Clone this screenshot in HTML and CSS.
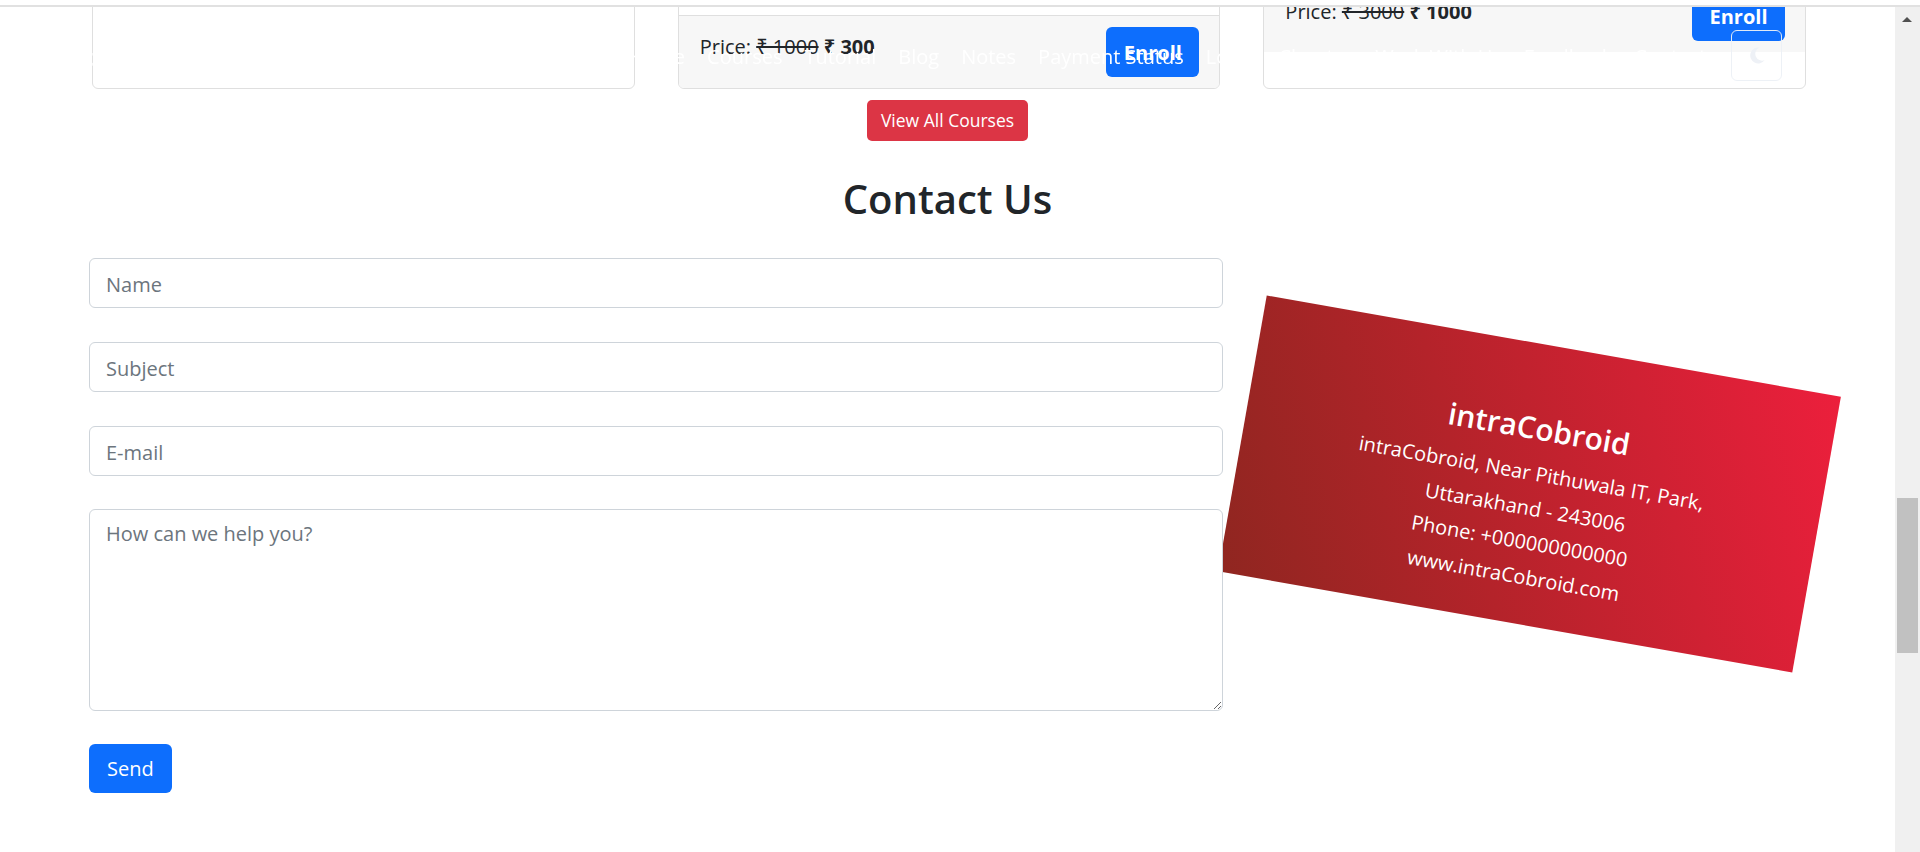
FILE: index.html
```html
<!DOCTYPE html>
<html lang="en">
<head>
<meta charset="utf-8">
<title>intraCobroid - Contact Us</title>
<link rel="stylesheet" href="styles.css">
</head>
<body>
<div class="topbar"></div>

<nav class="navbar">
  <span class="brand">intraCobroid</span>
  <ul class="nav">
    <li>Home</li>
    <li>Courses</li>
    <li>Tutorial</li>
    <li>Blog</li>
    <li>Notes</li>
    <li>Payment Status</li>
    <li>Login</li>
    <li>Chapter</li>
    <li>Work With Us</li>
    <li>Feedback</li>
    <li>Contact</li>
  </ul>
  <button class="mode" type="button" aria-label="Toggle dark mode">
    <svg width="20" height="20" viewBox="0 0 20 20"><path d="M12.5 2.5a8 8 0 1 0 5.2 12.6A6.6 6.6 0 0 1 12.5 2.5z" fill="#eef1f6"/></svg>
  </button>
</nav>

<main class="page">
  <section class="courses">
    <div class="card card-a"></div>
    <div class="card card-b">
      <div class="card-body"></div>
      <div class="card-footer">
        <span class="price">Price: <s>₹ 1000</s> <b>₹ 300</b></span>
        <button class="btn-enroll" type="button">Enroll</button>
      </div>
    </div>
    <div class="card card-c">
      <div class="card-footer">
        <span class="price">Price: <s>₹ 3000</s> <b>₹ 1000</b></span>
        <button class="btn-enroll" type="button">Enroll</button>
      </div>
      <div class="card-tail"></div>
    </div>
  </section>

  <div class="more"><a class="btn-red">View All Courses</a></div>

  <h2 class="title">Contact Us</h2>

  <section class="contact">
    <form class="form">
      <input class="field" type="text" placeholder="Name">
      <input class="field" type="text" placeholder="Subject">
      <input class="field" type="email" placeholder="E-mail">
      <textarea class="field area" placeholder="How can we help you?"></textarea>
      <button class="btn-send" type="button">Send</button>
    </form>
    <div class="aside">
      <div class="biz">
        <h3 class="biz-name">intraCobroid</h3>
        <p class="biz-line">intraCobroid, Near Pithuwala IT, Park,</p>
        <p class="biz-line">Uttarakhand - 243006</p>
        <p class="biz-line">Phone: +000000000000</p>
        <p class="biz-line">www.intraCobroid.com</p>
      </div>
    </div>
  </section>
</main>

<div class="scrollbar">
  <span class="sb-up"></span>
  <span class="sb-thumb"></span>
</div>
</body>
</html>
```

FILE: styles.css
```css
html, body {
  margin: 0;
  padding: 0;
  height: 852px;
  overflow: hidden;
  background: #fff;
}

body {
  font-family: "Open Sans", "Noto Sans", "DejaVu Sans", sans-serif;
  color: #212529;
}

/* thin strip at very top */
.topbar {
  position: fixed;
  top: 0;
  left: 0;
  width: 1920px;
  height: 5px;
  background: #fff;
  border-bottom: 2px solid #e1e1e1;
  z-index: 50;
}

/* transparent fixed navbar with white text */
.navbar {
  position: fixed;
  top: 0;
  left: 0;
  width: 1895px;
  height: 112px;
  display: flex;
  align-items: center;
  padding-left: 60px;
  box-sizing: border-box;
  z-index: 40;
  color: #fff;
  font-size: 20px;
  pointer-events: none;
}

.brand {
  font-size: 24px;
  font-weight: 700;
}

.nav {
  list-style: none;
  margin: 0 0 0 416px;
  padding: 0;
  display: flex;
  gap: 22px;
}

.mode {
  margin-left: auto;
  margin-right: 113px;
  margin-top: -2px;
  width: 51px;
  height: 51px;
  border: 1px solid rgba(236, 240, 245, 0.95);
  border-radius: 6px;
  background: transparent;
  display: flex;
  align-items: center;
  justify-content: center;
  padding: 0;
}

.page {
  width: 1895px;
}

/* course cards row (cut off at top) */
.courses {
  display: flex;
  gap: 43px;
  width: 1714px;
  margin: -40px 0 0 92px;
}

.card {
  flex: 1;
  height: 129px;
  border: 1px solid #dfdfdf;
  border-radius: 6px;
  box-sizing: border-box;
  background: #fff;
  display: flex;
  flex-direction: column;
  overflow: hidden;
}

.card-b .card-body {
  height: 54px;
}

.card-footer {
  display: flex;
  justify-content: space-between;
  align-items: flex-start;
  background: #f7f7f7;
  padding: 11px 20px 11px 21px;
}

.card-b .card-footer {
  flex: 1;
  border-top: 1px solid #dfdfdf;
}

.card-c .card-footer {
  padding-top: 30px;
}

.card-c .price {
  margin-top: 6px;
}

.card-tail {
  flex: 1;
}

.price {
  font-size: 20px;
  line-height: 30px;
  margin-top: 5px;
}

.price s {
  font-weight: 400;
}

.price b {
  font-weight: 700;
}

.btn-enroll {
  width: 93px;
  height: 50px;
  border: 0;
  border-radius: 6px;
  background: #0d6efd;
  color: #fff;
  font-family: inherit;
  font-size: 20px;
  font-weight: 700;
  padding: 0;
}

.more {
  text-align: center;
  margin-top: 11px;
}

.btn-red {
  display: inline-block;
  background: #dc3545;
  color: #fff;
  font-size: 17.5px;
  line-height: 27px;
  padding: 7px 14px;
  border-radius: 5px;
}

.title {
  text-align: center;
  font-size: 40px;
  line-height: 46px;
  font-weight: 600;
  margin: 35px 0 0;
}

.contact {
  display: flex;
  align-items: flex-start;
  margin-top: 36px;
}

.form {
  position: relative;
  z-index: 2;
  width: 1134px;
  margin-left: 89px;
  display: flex;
  flex-direction: column;
  align-items: flex-start;
}

.field {
  width: 100%;
  height: 50px;
  box-sizing: border-box;
  border: 1px solid #ced4da;
  border-radius: 6px;
  background: #fff;
  padding: 2px 16px 0;
  font-family: inherit;
  font-size: 20px;
  color: #212529;
  margin: 0 0 34px;
}

.field::placeholder {
  color: #6c757d;
}

.area {
  height: 202px;
  padding: 9px 16px;
  line-height: 30px;
  resize: vertical;
  margin-top: -1px;
  margin-bottom: 33px;
}

.btn-send {
  height: 49px;
  border: 0;
  border-radius: 6px;
  background: #0d6efd;
  color: #fff;
  font-family: inherit;
  font-size: 20px;
  padding: 0 18px;
}

/* rotated business card */
.aside {
  flex: none;
  margin-left: 15px;
  margin-top: 86px;
}

.biz {
  width: 583px;
  height: 280px;
  box-sizing: border-box;
  padding-top: 66px;
  transform: rotate(10deg);
  background: linear-gradient(65deg, #8f2620 0%, #b4232a 40%, #ec1f3c 100%);
  color: #fff;
  text-align: center;
}

.biz-name {
  margin: 0 0 10px;
  font-size: 30px;
  line-height: 36px;
  font-weight: 600;
}

.biz-line {
  margin: 0;
  font-size: 20px;
  line-height: 34.7px;
}

/* fake window scrollbar */
.scrollbar {
  position: fixed;
  top: 0;
  right: 0;
  width: 25px;
  height: 852px;
  background: #f0f0f0;
  z-index: 30;
}

.sb-up {
  position: absolute;
  top: 17px;
  left: 7px;
  width: 0;
  height: 0;
  border-left: 5px solid transparent;
  border-right: 5px solid transparent;
  border-bottom: 5px solid #505050;
}

.sb-thumb {
  position: absolute;
  top: 498px;
  left: 2px;
  width: 21px;
  height: 155px;
  background: #c1c1c1;
}
```
